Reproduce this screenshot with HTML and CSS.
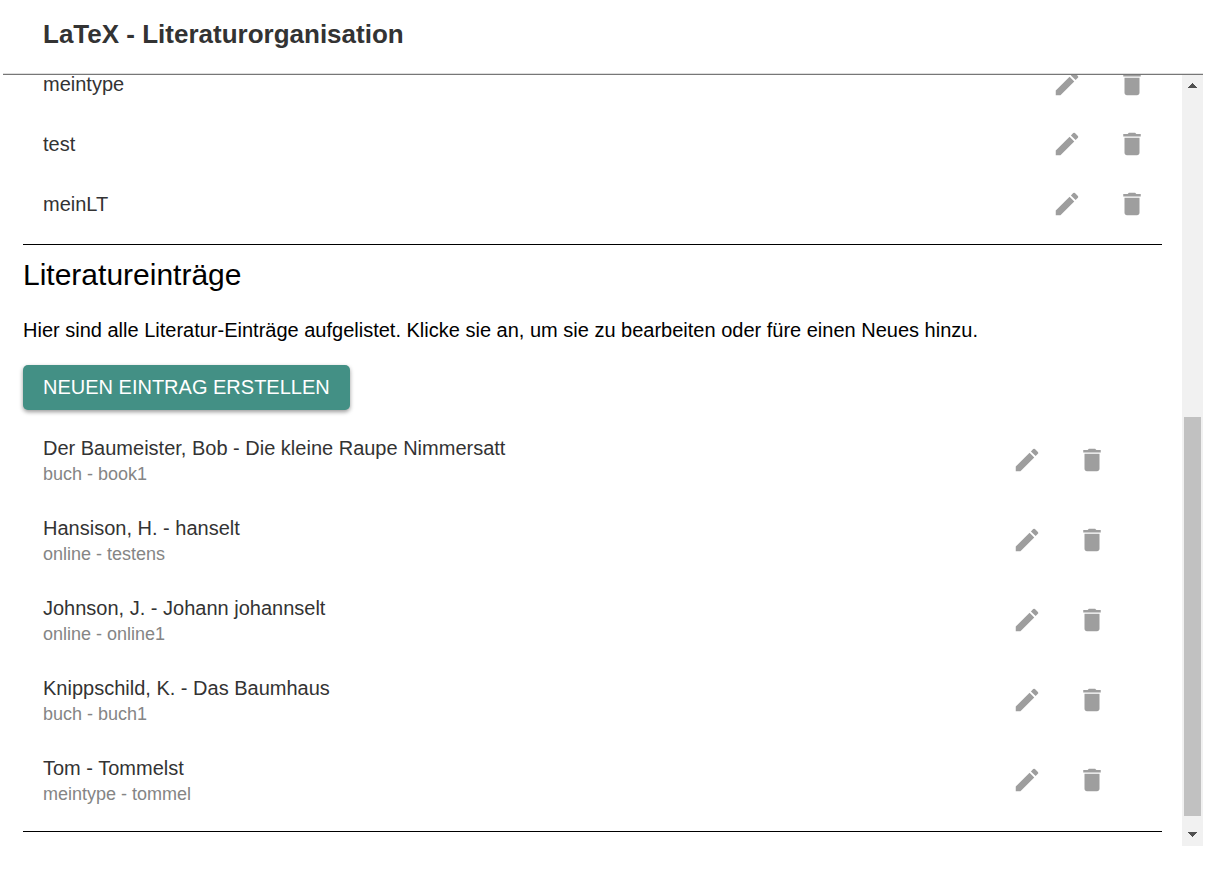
FILE: index.html
```html
<!DOCTYPE html>
<html lang="de">
<head>
<meta charset="utf-8">
<title>LaTeX - Literaturorganisation</title>
<link rel="stylesheet" href="styles.css">
</head>
<body>
<svg class="sprite" aria-hidden="true">
  <symbol id="edit" viewBox="0 0 24 24"><path d="M3 17.25V21h3.75L17.81 9.94l-3.75-3.75L3 17.25zM20.71 7.04c.39-.39.39-1.02 0-1.41l-2.34-2.34a.9959.9959 0 0 0-1.41 0l-1.83 1.83 3.75 3.75 1.83-1.83z"/></symbol>
  <symbol id="delete" viewBox="0 0 24 24"><path d="M6 19c0 1.1.9 2 2 2h8c1.1 0 2-.9 2-2V7H6v12zM19 4h-3.5l-1-1h-5l-1 1H5v2h14V4z"/></symbol>
</svg>
<div class="app">
  <header class="header"><h1 class="title">LaTeX - Literaturorganisation</h1></header>
  <div class="body">
    <main class="content">
      <ul class="list types">
        <li class="row"><span class="name">meintype</span><button class="icon" aria-label="meintype bearbeiten"><svg><use href="#edit"/></svg></button><button class="icon" aria-label="meintype löschen"><svg><use href="#delete"/></svg></button></li>
        <li class="row"><span class="name">test</span><button class="icon" aria-label="test bearbeiten"><svg><use href="#edit"/></svg></button><button class="icon" aria-label="test löschen"><svg><use href="#delete"/></svg></button></li>
        <li class="row"><span class="name">meinLT</span><button class="icon" aria-label="meinLT bearbeiten"><svg><use href="#edit"/></svg></button><button class="icon" aria-label="meinLT löschen"><svg><use href="#delete"/></svg></button></li>
      </ul>
      <section class="section">
        <h2 class="heading">Literatureinträge</h2>
        <p class="intro">Hier sind alle Literatur-Einträge aufgelistet. Klicke sie an, um sie zu bearbeiten oder füre einen Neues hinzu.</p>
        <button class="create">Neuen Eintrag erstellen</button>
        <ul class="list entries">
          <li class="row"><div class="entry"><span class="name">Der Baumeister, Bob - Die kleine Raupe Nimmersatt</span><span class="meta">buch - book1</span></div><button class="icon" aria-label="book1 bearbeiten"><svg><use href="#edit"/></svg></button><button class="icon" aria-label="book1 löschen"><svg><use href="#delete"/></svg></button></li>
          <li class="row"><div class="entry"><span class="name">Hansison, H. - hanselt</span><span class="meta">online - testens</span></div><button class="icon" aria-label="testens bearbeiten"><svg><use href="#edit"/></svg></button><button class="icon" aria-label="testens löschen"><svg><use href="#delete"/></svg></button></li>
          <li class="row"><div class="entry"><span class="name">Johnson, J. - Johann johannselt</span><span class="meta">online - online1</span></div><button class="icon" aria-label="online1 bearbeiten"><svg><use href="#edit"/></svg></button><button class="icon" aria-label="online1 löschen"><svg><use href="#delete"/></svg></button></li>
          <li class="row"><div class="entry"><span class="name">Knippschild, K. - Das Baumhaus</span><span class="meta">buch - buch1</span></div><button class="icon" aria-label="buch1 bearbeiten"><svg><use href="#edit"/></svg></button><button class="icon" aria-label="buch1 löschen"><svg><use href="#delete"/></svg></button></li>
          <li class="row"><div class="entry"><span class="name">Tom - Tommelst</span><span class="meta">meintype - tommel</span></div><button class="icon" aria-label="tommel bearbeiten"><svg><use href="#edit"/></svg></button><button class="icon" aria-label="tommel löschen"><svg><use href="#delete"/></svg></button></li>
        </ul>
      </section>
    </main>
    <div class="scrollbar">
      <button class="arrow" aria-label="Nach oben"><svg viewBox="0 0 21 21"><path d="M6 13h9v-1h-1v-1h-1v-1h-1V9h-1V8h-1v1H9v1H8v1H7v1H6z"/></svg></button>
      <div class="before"></div>
      <div class="thumb"></div>
      <div class="after"></div>
      <button class="arrow" aria-label="Nach unten"><svg viewBox="0 0 21 21"><path d="M6 7h9v1h-1v1h-1v1h-1v1h-1v1h-1v-1H9v-1H8V9H7V8H6z"/></svg></button>
    </div>
  </div>
</div>
</body>
</html>
```
FILE: styles.css
```css
* { box-sizing: border-box; }
body {
  margin: 0;
  background: #fff;
  color: #000;
  font-family: "Liberation Sans", Arial, sans-serif;
  font-size: 20px;
}
h1, h2, p, ul { margin: 0; padding: 0; }
button { border: 0; padding: 0; background: none; font: inherit; cursor: pointer; }
.sprite { display: none; }
.app {
  display: flex;
  flex-direction: column;
  height: 100vh;
  padding: 0 19px 44px 3px;
}
.header {
  flex: none;
  padding: 15px 40px 21px;
  border-bottom: 1px solid #777;
  box-shadow: inset 0 -1px #ddd;
}
.title { color: #333; font-size: 26px; line-height: 38px; }
.body { display: flex; flex: 1; min-height: 0; }
.content {
  display: flex;
  flex: 1;
  flex-direction: column;
  justify-content: flex-end;
  min-width: 0;
  overflow: hidden;
  padding: 0 20px 14px;
}
.list { list-style: none; padding: 10px 0; }
.types { border-bottom: 1px solid #000; }
.row { display: flex; align-items: center; gap: 35px; height: 60px; padding: 0 15px 0 20px; }
.entries .row { height: 80px; padding-right: 55px; }
.name { flex: 1; color: #333; line-height: 20px; }
.entries .name { line-height: 28px; }
.entry { display: flex; flex: 1; flex-direction: column; }
.meta { color: #858585; font-size: 18px; line-height: 24px; }
.icon { width: 30px; height: 30px; }
.icon svg { display: block; width: 30px; height: 30px; fill: #9e9e9e; }
.section { padding-bottom: 1px; border-bottom: 1px solid #000; }
.heading { margin: 10px 0 20px; font-size: 30px; font-weight: 400; line-height: 40px; }
.intro { margin-bottom: 20px; line-height: 30px; }
.create {
  display: block;
  height: 45px;
  padding: 0 20px;
  border-radius: 5px;
  background: #439085;
  box-shadow: 0 2px 4px rgba(0, 0, 0, .4);
  color: #fff;
  text-transform: uppercase;
}
.scrollbar { display: flex; flex: none; flex-direction: column; width: 21px; background: #f1f1f1; }
.arrow { height: 21px; }
.arrow svg { display: block; width: 21px; height: 21px; fill: #505050; }
.before { flex: 321; }
.thumb { flex: 399; margin: 0 2px; background: #c1c1c1; }
.after { flex: 9; }
```
